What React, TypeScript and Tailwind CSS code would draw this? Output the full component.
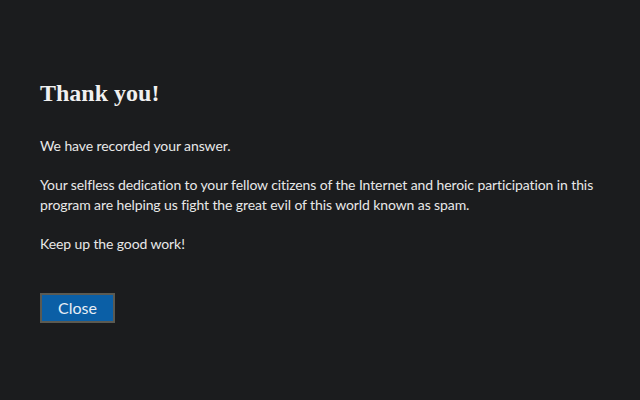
import React from "react";

const App = () => {
  return (
    <div className="h-[400px] w-[640px] bg-[#1b1c1e] text-[#e8e8e8] px-10 pt-[78px]" style={{ fontFamily: "Lato, sans-serif" }}>
      <h1 className="text-[24px] font-bold leading-[30px] text-[#f0f0f0]" style={{ fontFamily: "'Liberation Serif', serif" }}>
        Thank you!
      </h1>
      <div className="mt-[28px] text-[14px] leading-[20px] tracking-[-0.1px] space-y-[19px]">
        <p>We have recorded your answer.</p>
        <p>
          Your selfless dedication to your fellow citizens of the Internet and heroic participation in this program are
          helping us fight the great evil of this world known as spam.
        </p>
        <p>Keep up the good work!</p>
      </div>
      <button
        type="button"
        className="mt-[39px] w-[75px] h-[30px] bg-[#0b5fa6] border-2 border-[#5b5a52] text-[16px] text-[#e8eef5]"
      >
        Close
      </button>
    </div>
  );
};

export default App;
